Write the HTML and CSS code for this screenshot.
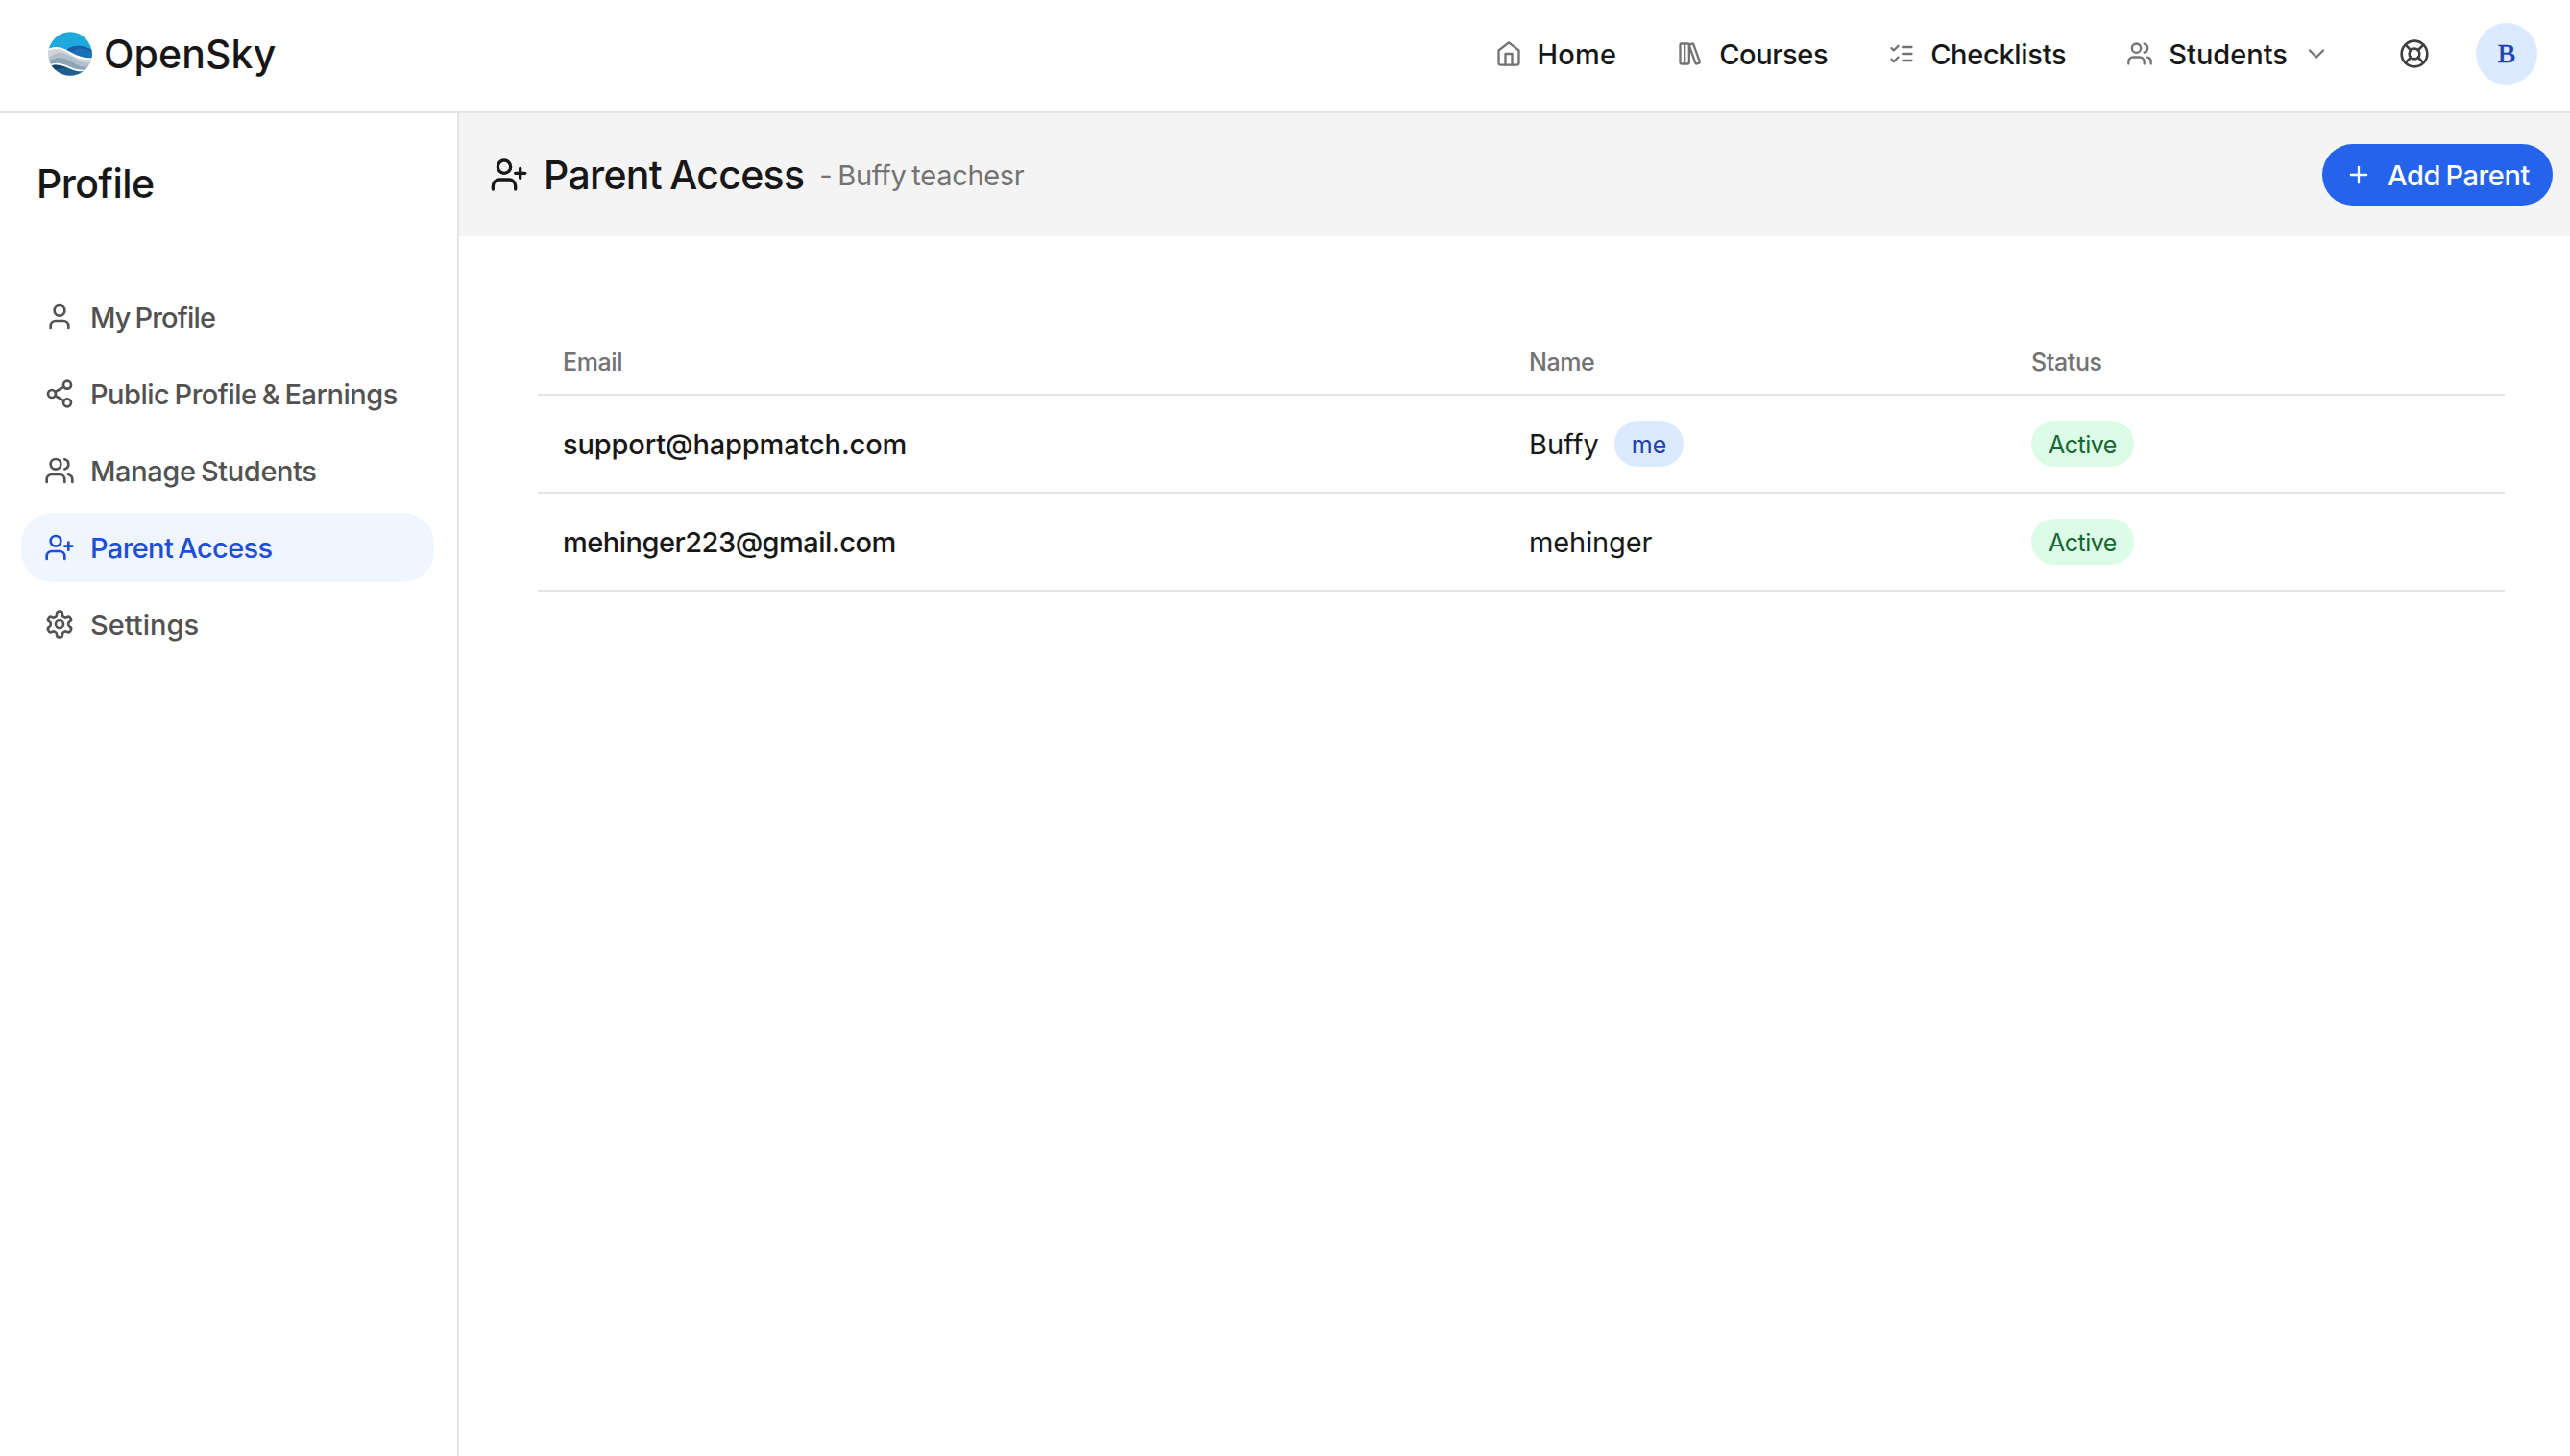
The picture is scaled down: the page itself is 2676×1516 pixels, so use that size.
FILE: index.html
```
<!DOCTYPE html>
<html lang="en">
<head>
    <meta charset="UTF-8">
    <meta name="viewport" content="width=device-width, initial-scale=1.0">
    <title>Parent Access - OpenSky</title>
    <link rel="stylesheet" href="styles.css">
</head>
<body>
    <header class="topbar">
        <a class="brand" href="#">
            <svg class="brand-logo" viewBox="0 0 46 46">
                <clipPath id="disc"><circle cx="23" cy="23" r="22.700"/></clipPath>
                <g clip-path="url(#disc)">
                    <rect width="46" height="46" fill="#1fa8dc"/>
                    <path d="M20 18C28 13 38 14 46 19V34H20z" fill="#1a5fa6"/>
                    <path d="M25 21C32 16 40 17 46 22V32H25z" fill="#1c70b8"/>
                    <path d="M0 18C10 13 18 18 25 22S40 28 46 27V46H0z" fill="#fff"/>
                    <path d="M0 20C10 15 17 19 24 24S40 29 46 28.500V46H0z" fill="#d3d5d8"/>
                    <path d="M0 28C9 19 17 22 25 26S38 35 46 31V46H0z" fill="#b3bfcb"/>
                    <path d="M0 32C9 24 18 27 26 32S38 38 46 36V46H0z" fill="#8ea5b8"/>
                    <path d="M0 35C10 30 17 34 24 37S36 41 46 38V46H0z" fill="#fff"/>
                    <path d="M0 36.500C10 32 17 36 24 39S36 42 46 39.500V46H0z" fill="#1f5f8f"/>
                    <path d="M0 36.500C7 33 14 35 19 38C14 38 8 38 4 42z" fill="#154566"/>
                </g>
            </svg>
            <span class="brand-name">OpenSky</span>
        </a>
        <nav class="main-nav">
            <a class="nav-link nav-home" href="#">
                <svg class="icon icon-sm" viewBox="0 0 24 24"><path d="m3 9 9-7 9 7v11a2 2 0 0 1-2 2H5a2 2 0 0 1-2-2z"/><path d="M9 22V12h6v10"/></svg>
                <span>Home</span>
            </a>
            <a class="nav-link nav-courses" href="#">
                <svg class="icon icon-sm" viewBox="0 0 24 24"><rect width="8" height="18" x="3" y="3" rx="1"/><path d="M7 3v18"/><path d="M20.400 18.900c.2.500-.1 1.100-.6 1.300l-1.900.7c-.5.200-1.100-.1-1.300-.6L11.100 5.100c-.2-.5.1-1.100.6-1.300l1.900-.7c.5-.2 1.100.1 1.300.6Z"/></svg>
                <span>Courses</span>
            </a>
            <a class="nav-link nav-checklists" href="#">
                <svg class="icon icon-sm" viewBox="0 0 24 24"><path d="m3 17 2 2 4-4"/><path d="m3 7 2 2 4-4"/><path d="M13 6h8"/><path d="M13 12h8"/><path d="M13 18h8"/></svg>
                <span>Checklists</span>
            </a>
            <a class="nav-link" href="#">
                <svg class="icon icon-sm" viewBox="0 0 24 24"><path d="M16 21v-2a4 4 0 0 0-4-4H6a4 4 0 0 0-4 4v2"/><circle cx="9" cy="7" r="4"/><path d="M22 21v-2a4 4 0 0 0-3-3.870"/><path d="M16 3.130a4 4 0 0 1 0 7.750"/></svg>
                <span>Students</span>
                <svg class="icon icon-sm" viewBox="0 0 24 24"><path d="m6 9 6 6 6-6"/></svg>
            </a>
        </nav>
        <a class="help" href="#">
            <svg class="icon icon-md" viewBox="0 0 24 24"><circle cx="12" cy="12" r="10"/><path d="m4.930 4.930 4.240 4.240"/><path d="m14.830 9.170 4.240-4.240"/><path d="m14.830 14.830 4.240 4.240"/><path d="m9.170 14.830-4.240 4.240"/><circle cx="12" cy="12" r="4"/></svg>
        </a>
        <span class="avatar">B</span>
    </header>

    <div class="layout">
        <aside class="sidebar">
            <h2 class="sidebar-title">Profile</h2>
            <nav class="side-nav">
                <a class="side-link side-profile" href="#">
                    <svg class="icon icon-md" viewBox="0 0 24 24"><path d="M19 21v-2a4 4 0 0 0-4-4H9a4 4 0 0 0-4 4v2"/><circle cx="12" cy="7" r="4"/></svg>
                    <span>My Profile</span>
                </a>
                <a class="side-link side-public" href="#">
                    <svg class="icon icon-md" viewBox="0 0 24 24"><circle cx="18" cy="5" r="3"/><circle cx="6" cy="12" r="3"/><circle cx="18" cy="19" r="3"/><path d="m8.590 13.510 6.830 3.980"/><path d="m15.410 6.510-6.820 3.980"/></svg>
                    <span>Public Profile &amp; Earnings</span>
                </a>
                <a class="side-link" href="#">
                    <svg class="icon icon-md" viewBox="0 0 24 24"><path d="M16 21v-2a4 4 0 0 0-4-4H6a4 4 0 0 0-4 4v2"/><circle cx="9" cy="7" r="4"/><path d="M22 21v-2a4 4 0 0 0-3-3.870"/><path d="M16 3.130a4 4 0 0 1 0 7.750"/></svg>
                    <span>Manage Students</span>
                </a>
                <a class="side-link active" href="#">
                    <svg class="icon icon-md" viewBox="0 0 24 24"><path d="M16 21v-2a4 4 0 0 0-4-4H6a4 4 0 0 0-4 4v2"/><circle cx="9" cy="7" r="4"/><path d="M19 8v6"/><path d="M22 11h-6"/></svg>
                    <span>Parent Access</span>
                </a>
                <a class="side-link side-settings" href="#">
                    <svg class="icon icon-md" viewBox="0 0 24 24"><path d="M12.220 2h-.44a2 2 0 0 0-2 2v.18a2 2 0 0 1-1 1.730l-.43.25a2 2 0 0 1-2 0l-.15-.08a2 2 0 0 0-2.730.73l-.22.38a2 2 0 0 0 .73 2.730l.15.1a2 2 0 0 1 1 1.720v.51a2 2 0 0 1-1 1.740l-.15.09a2 2 0 0 0-.73 2.730l.22.38a2 2 0 0 0 2.730.73l.15-.08a2 2 0 0 1 2 0l.43.25a2 2 0 0 1 1 1.730V20a2 2 0 0 0 2 2h.44a2 2 0 0 0 2-2v-.18a2 2 0 0 1 1-1.730l.43-.25a2 2 0 0 1 2 0l.15.08a2 2 0 0 0 2.730-.73l.22-.39a2 2 0 0 0-.73-2.730l-.15-.08a2 2 0 0 1-1-1.740v-.5a2 2 0 0 1 1-1.740l.15-.09a2 2 0 0 0 .73-2.730l-.22-.38a2 2 0 0 0-2.730-.73l-.15.08a2 2 0 0 1-2 0l-.43-.25a2 2 0 0 1-1-1.730V4a2 2 0 0 0-2-2z"/><circle cx="12" cy="12" r="3"/></svg>
                    <span>Settings</span>
                </a>
            </nav>
        </aside>

        <main class="content">
            <div class="page-header">
                <svg class="icon icon-lg" viewBox="0 0 24 24"><path d="M16 21v-2a4 4 0 0 0-4-4H6a4 4 0 0 0-4 4v2"/><circle cx="9" cy="7" r="4"/><path d="M19 8v6"/><path d="M22 11h-6"/></svg>
                <h1 class="page-title">Parent Access</h1>
                <span class="page-subtitle">- Buffy teachesr</span>
                <button class="btn-add">
                    <svg class="icon icon-sm" viewBox="0 0 24 24"><path d="M5 12h14"/><path d="M12 5v14"/></svg>
                    <span>Add Parent</span>
                </button>
            </div>

            <table class="parents">
                <thead>
                    <tr>
                        <th class="col-email">Email</th>
                        <th class="col-name">Name</th>
                        <th>Status</th>
                    </tr>
                </thead>
                <tbody>
                    <tr>
                        <td class="email">support@happmatch.com</td>
                        <td>
                            <div class="name-cell">
                                <span>Buffy</span>
                                <span class="badge badge-me">me</span>
                            </div>
                        </td>
                        <td><span class="badge badge-active">Active</span></td>
                    </tr>
                    <tr>
                        <td class="email email-tight">mehinger223@gmail.com</td>
                        <td>mehinger</td>
                        <td><span class="badge badge-active">Active</span></td>
                    </tr>
                </tbody>
            </table>
        </main>
    </div>
</body>
</html>
```
FILE: styles.css
```
* {
    box-sizing: border-box;
}

body {
    margin: 0;
    font-family: Inter, "Liberation Sans", sans-serif;
    font-size: 29px;
    word-spacing: -2px;
    color: #171717;
    background-color: #fff;
}

a {
    color: inherit;
    text-decoration: none;
}

.icon {
    flex: none;
    fill: none;
    stroke: currentColor;
    stroke-width: 2;
    stroke-linecap: round;
    stroke-linejoin: round;
}

.icon-sm {
    width: 28px;
    height: 28px;
}

.icon-md {
    width: 32px;
    height: 32px;
}

.icon-lg {
    width: 40px;
    height: 40px;
}

/* Top bar */
.topbar {
    display: flex;
    align-items: center;
    height: 118px;
    padding: 0 34px 4px 50px;
    border-bottom: 2px solid #e5e5e5;
}

.brand {
    display: flex;
    align-items: center;
    gap: 12px;
    margin-right: auto;
}

.brand-logo {
    width: 46px;
    height: 46px;
}

.brand-name {
    font-size: 41px;
    font-weight: 500;
    letter-spacing: 0.1px;
}

.main-nav {
    display: flex;
    gap: 63px;
}

.nav-link {
    display: flex;
    align-items: center;
    gap: 16px;
    font-weight: 500;
}

.nav-link .icon {
    color: #737373;
}

.nav-home {
    letter-spacing: 0.2px;
}

.nav-courses {
    letter-spacing: -0.4px;
}

.nav-checklists {
    letter-spacing: -0.3px;
}

.help {
    display: flex;
    margin: 0 48px 0 72px;
    color: #404040;
}

.avatar {
    display: flex;
    align-items: center;
    justify-content: center;
    width: 64px;
    height: 64px;
    border-radius: 50%;
    background-color: #dbeafe;
    color: #1e40af;
    font-family: "Liberation Serif", serif;
    font-size: 28px;
    -webkit-text-stroke: 0.6px #1e40af;
}

/* Sidebar */
.layout {
    display: flex;
    min-height: calc(100vh - 118px);
}

.sidebar {
    flex: none;
    width: 478px;
    padding: 43px 24px 0 22px;
    border-right: 2px solid #e5e5e5;
}

.sidebar-title {
    margin: 0 0 73px 16px;
    font-size: 41px;
    font-weight: 500;
    line-height: 60px;
    letter-spacing: -0.6px;
}

.side-nav {
    display: flex;
    flex-direction: column;
    gap: 8px;
}

.side-link {
    display: flex;
    align-items: center;
    gap: 16px;
    height: 72px;
    padding: 0 24px;
    border-radius: 32px;
    color: #525252;
    font-weight: 500;
    letter-spacing: -0.38px;
    white-space: nowrap;
}

.side-profile {
    letter-spacing: -0.85px;
}

.side-public {
    letter-spacing: -0.5px;
}

.side-settings {
    letter-spacing: 0;
}

.side-link.active {
    background-color: #eff6ff;
    color: #1d4ed8;
    letter-spacing: -0.63px;
}

/* Content */
.content {
    flex: 1;
}

.page-header {
    display: flex;
    align-items: center;
    height: 128px;
    padding: 0 18px 0 32px;
    background-color: #f4f4f4;
}

.page-title {
    margin: 0 16px;
    font-size: 41px;
    font-weight: 500;
    letter-spacing: -0.7px;
}

.page-subtitle {
    color: #737373;
    letter-spacing: -0.3px;
}

.btn-add {
    display: flex;
    align-items: center;
    gap: 16px;
    height: 64px;
    margin-left: auto;
    padding: 0 24px;
    border: none;
    border-radius: 32px;
    background-color: #2563eb;
    color: #fff;
    font-family: inherit;
    font-size: 29px;
    font-weight: 500;
    letter-spacing: -0.4px;
    word-spacing: -2px;
}

/* Parents table */
.parents {
    width: 2048px;
    margin: 84px 0 0 82px;
    border-collapse: separate;
    border-spacing: 0;
    table-layout: fixed;
}

.parents th,
.parents td {
    padding: 0 26px;
    border-bottom: 2px solid #e5e5e5;
    text-align: left;
    vertical-align: middle;
}

.parents th {
    height: 82px;
    padding-top: 14px;
    color: #737373;
    font-size: 25px;
    font-weight: 500;
    letter-spacing: -0.4px;
}

.parents td {
    height: 102px;
    letter-spacing: -0.1px;
}

.parents .email {
    font-weight: 500;
    letter-spacing: -0.14px;
}

.parents .email-tight {
    letter-spacing: -0.5px;
}

.col-email {
    width: 1006px;
}

.col-name {
    width: 523px;
}

.name-cell {
    display: flex;
    align-items: center;
    gap: 16px;
    letter-spacing: 0;
}

.badge {
    display: inline-flex;
    align-items: center;
    height: 48px;
    padding: 2px 18px 0;
    border-radius: 24px;
    font-size: 25px;
}

.badge-me {
    background-color: #dbeafe;
    color: #1e40af;
}

.badge-active {
    background-color: #dcfce7;
    color: #166534;
    letter-spacing: -0.5px;
}
```
